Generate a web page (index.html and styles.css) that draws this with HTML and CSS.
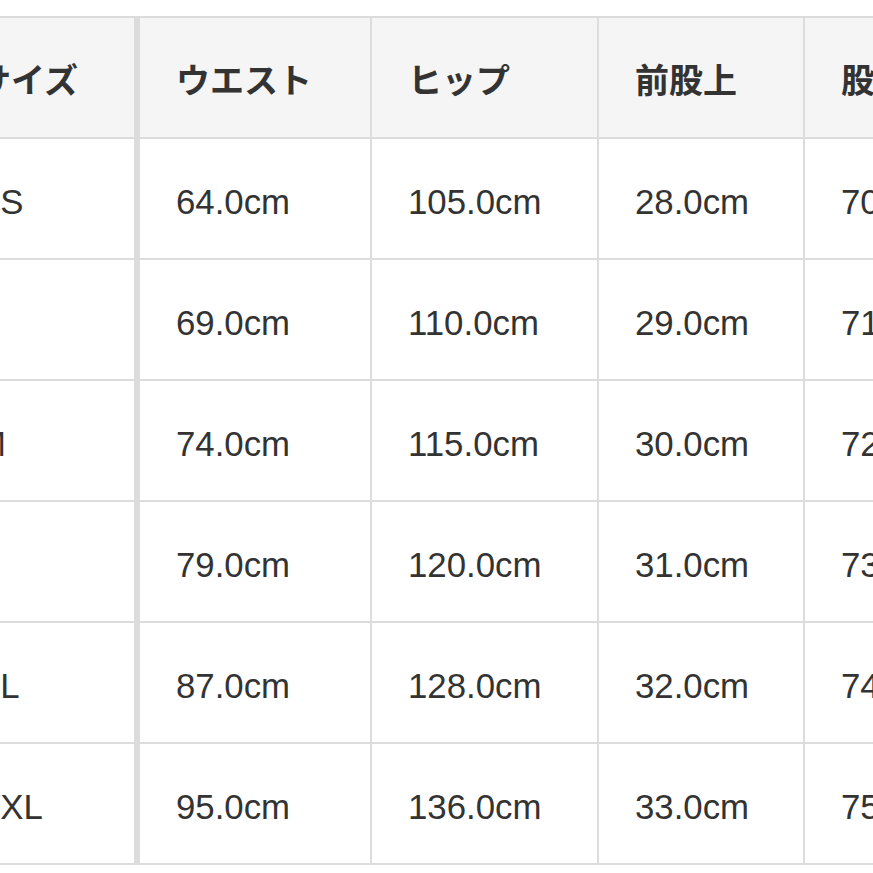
FILE: index.html
```html
<!DOCTYPE html>
<html lang="ja">
<head>
<meta charset="utf-8">
<title>サイズ表</title>
<link rel="stylesheet" href="styles.css">
</head>
<body>
<table class="size-table">
  <colgroup>
    <col class="c-size">
    <col class="c-waist">
    <col class="c-hip">
    <col class="c-rise">
    <col class="c-inseam">
  </colgroup>
  <thead>
    <tr class="head-row">
      <th class="first">サイズ</th>
      <th>ウエスト</th>
      <th>ヒップ</th>
      <th>前股上</th>
      <th>股下</th>
    </tr>
  </thead>
  <tbody>
    <tr><td class="first">XS</td><td>64.0cm</td><td>105.0cm</td><td>28.0cm</td><td>70.0cm</td></tr>
    <tr><td class="first">S</td><td>69.0cm</td><td>110.0cm</td><td>29.0cm</td><td>71.0cm</td></tr>
    <tr><td class="first">M</td><td>74.0cm</td><td>115.0cm</td><td>30.0cm</td><td>72.0cm</td></tr>
    <tr><td class="first">L</td><td>79.0cm</td><td>120.0cm</td><td>31.0cm</td><td>73.0cm</td></tr>
    <tr><td class="first">XL</td><td>87.0cm</td><td>128.0cm</td><td>32.0cm</td><td>74.0cm</td></tr>
    <tr><td class="first">XXL</td><td>95.0cm</td><td>136.0cm</td><td>33.0cm</td><td>75.0cm</td></tr>
  </tbody>
</table>
</body>
</html>
```

FILE: styles.css
```css
html, body {
  margin: 0;
  padding: 0;
  background: #ffffff;
  overflow: hidden;
}

.size-table {
  margin: 16px 0 0 -59px;
  border-collapse: separate;
  border-spacing: 0;
  table-layout: fixed;
  width: 1096px;
  border-top: 2px solid #dcdcdc;
  color: #333333;
  font-family: "Liberation Sans", "Noto Sans CJK JP", sans-serif;
  font-size: 34.8px;
}

.c-size { width: 199px; }
.c-waist { width: 232px; }
.c-hip { width: 227px; }
.c-rise { width: 206px; }
.c-inseam { width: 232px; }

.size-table th,
.size-table td {
  box-sizing: border-box;
  border-right: 2px solid #dcdcdc;
  border-bottom: 2px solid #dcdcdc;
  padding: 7px 0 0 36px;
  text-align: left;
  vertical-align: middle;
  white-space: nowrap;
  overflow: hidden;
}

.size-table .first {
  border-right-width: 6px;
}

.size-table thead tr {
  height: 121px;
}

.size-table tbody tr {
  height: 121px;
}

.size-table th {
  background: #f5f5f5;
  font-family: "Noto Sans CJK JP", sans-serif;
  font-weight: 700;
  font-size: 34px;
  padding-top: 2px;
  letter-spacing: 0;
}
```
